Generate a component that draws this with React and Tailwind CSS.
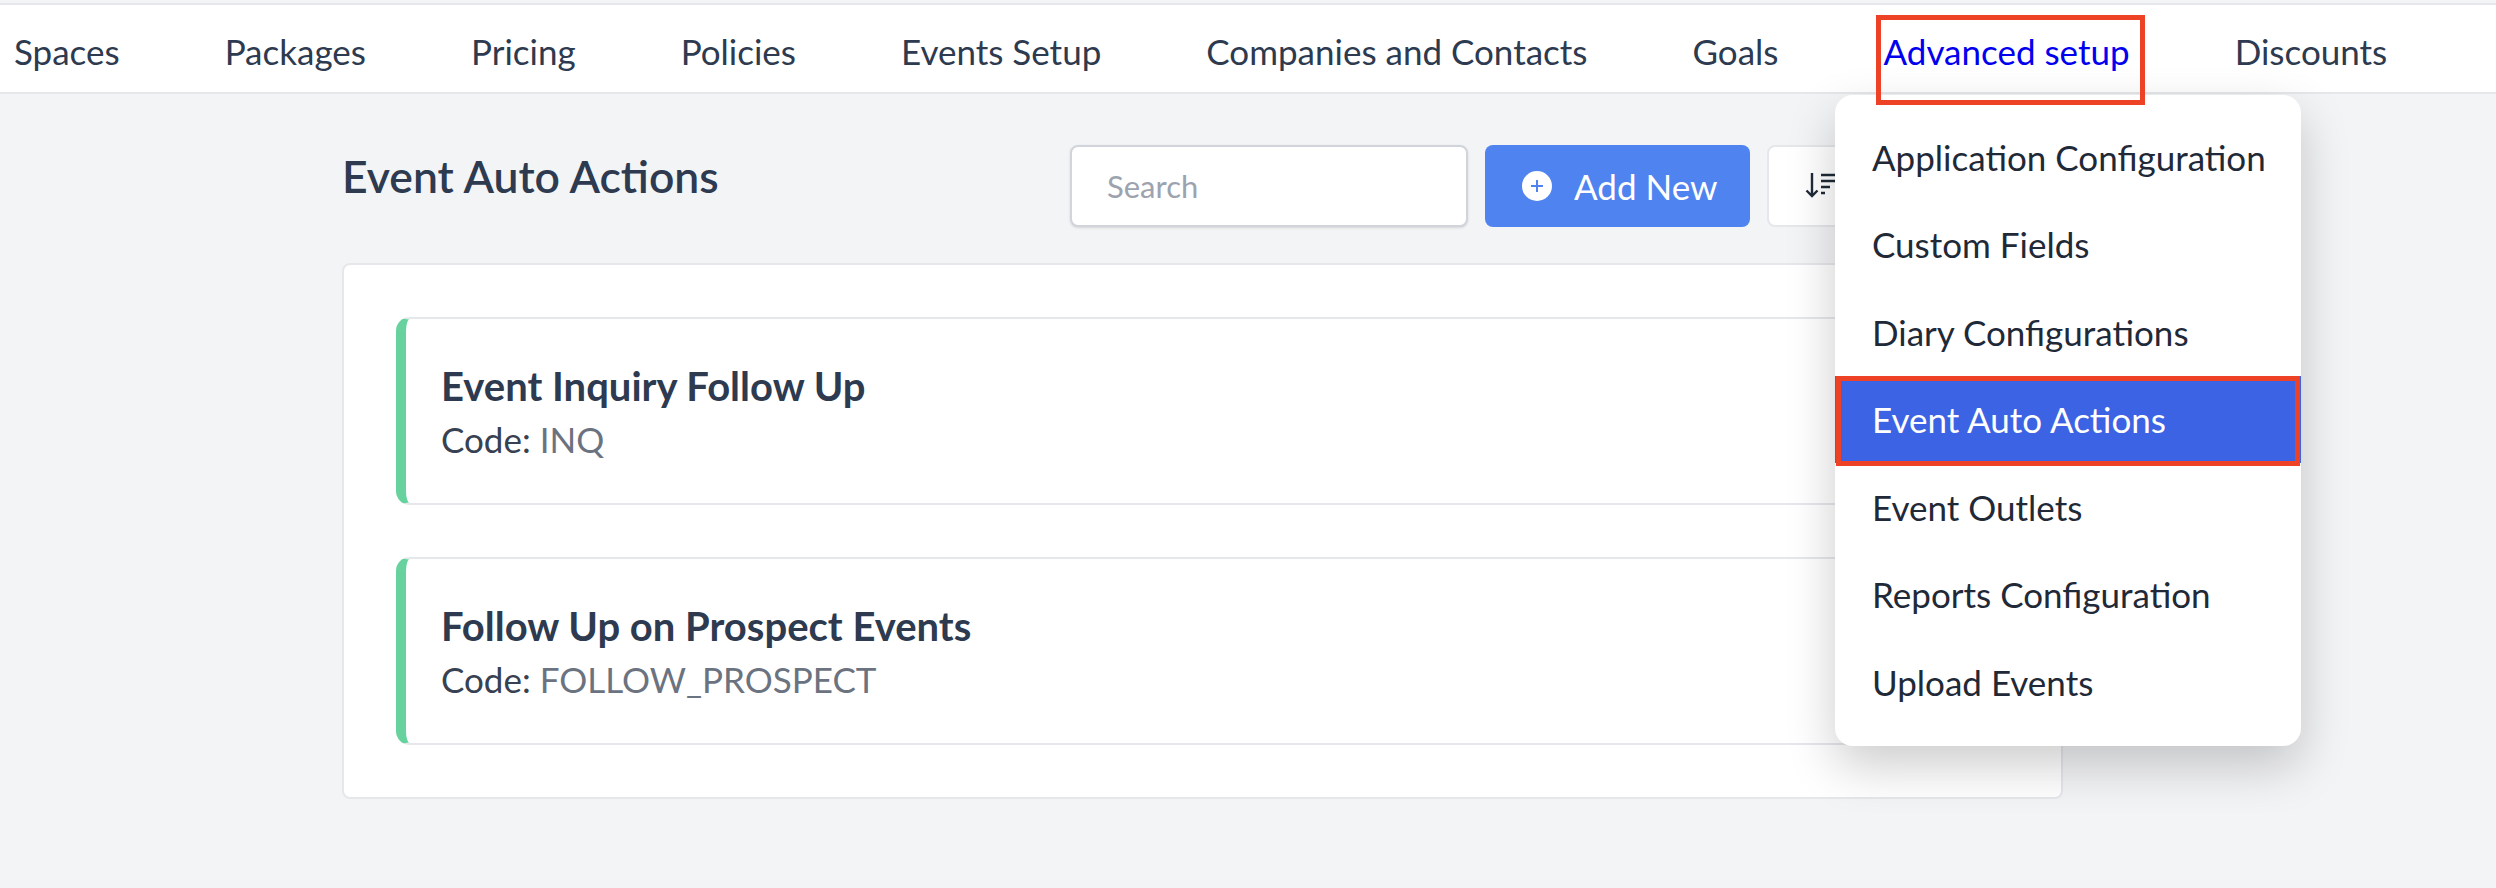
import React from "react";

const NAV_ITEMS = [
  "Spaces",
  "Packages",
  "Pricing",
  "Policies",
  "Events Setup",
  "Companies and Contacts",
  "Goals",
  "Advanced setup",
  "Discounts",
];

const MENU_ITEMS = [
  "Application Configuration",
  "Custom Fields",
  "Diary Configurations",
  "Event Auto Actions",
  "Event Outlets",
  "Reports Configuration",
  "Upload Events",
];

const ACTIONS = [
  { name: "Event Inquiry Follow Up", code: "INQ" },
  { name: "Follow Up on Prospect Events", code: "FOLLOW_PROSPECT" },
];

function SortIcon() {
  return (
    <svg width="40" height="32" viewBox="0 0 40 32" fill="none" stroke="#1f2937" strokeWidth="2.4">
      <path d="M8 3v23M2.5 20.5 8 26l5.500-5.500" />
      <path d="M17 5h20M17 11h15M17 17h9M17 23h4" />
    </svg>
  );
}

function ActionCard({ name, code }) {
  return (
    <div className="flex h-[188px] flex-col justify-center rounded-[14px] border-2 border-l-[10px] border-[#e5e7eb] border-l-[#68d29f] bg-white pl-[35px]">
      <div className="text-[40px] leading-[50px] font-bold text-[#2d3a4f]">{name}</div>
      <div className="mt-[6px] text-[35px] leading-[44px] text-[#374151]">
        Code: <span className="text-[#6b7280]">{code}</span>
      </div>
    </div>
  );
}

export default function App() {
  return (
    <div className="relative h-[888px] overflow-hidden bg-[#f3f4f6] font-['Lato',sans-serif]">
      {/* top nav */}
      <nav className="mt-[3px] flex h-[91px] items-start gap-[105px] border-t-[2px] border-b-[2px] border-[#e5e7eb] bg-white pt-[22px] pl-[14px] text-[35px] leading-[48px] text-[#2d3a4f]">
        {NAV_ITEMS.map((item) => (
          <a key={item} className={item === "Advanced setup" ? "text-[#0000ee]" : ""}>
            {item}
          </a>
        ))}
      </nav>

      <main className="ml-[342px] w-[1721px]">
        <div className="flex items-start justify-between pt-[51px]">
          <h1 className="mt-[6px] text-[44.500px] leading-[50px] font-semibold text-[#2d3a4f]">
            Event Auto Actions
          </h1>
          <div className="flex gap-[17px]">
            <div className="flex h-[82px] w-[398px] items-center rounded-[8px] border-2 border-[#d1d5db] bg-white pl-[35px] text-[31px] text-[#9ca3af] shadow-sm">
              Search
            </div>
            <button className="flex h-[82px] w-[265px] items-center rounded-[8px] bg-[#4f83ef] pl-[37px] text-[35px] text-white">
              <span className="mr-[22px] flex h-[30px] w-[30px] items-center justify-center rounded-full bg-white">
                <svg width="14" height="14" viewBox="0 0 14 14" stroke="#4f83ef" strokeWidth="2">
                  <path d="M7 1v12M1 7h12" />
                </svg>
              </span>
              Add New
            </button>
            <button className="flex h-[82px] w-[296px] items-center rounded-[8px] border-2 border-[#e5e7eb] bg-white pl-[35px]">
              <SortIcon />
            </button>
          </div>
        </div>

        <div className="mt-[36px] flex h-[536px] flex-col gap-[52px] rounded-[8px] border-2 border-[#e5e7eb] bg-white px-[52px] pt-[52px]">
          {ACTIONS.map((action) => (
            <ActionCard key={action.code} {...action} />
          ))}
        </div>
      </main>

      {/* dropdown under Advanced setup */}
      <div className="absolute top-[95px] left-[1835px] w-[466px] rounded-[18px] bg-white pt-[18px] pb-[20px] text-[35px] text-[#1f2937] shadow-[0_20px_50px_rgba(0,0,0,0.2)]">
        {MENU_ITEMS.map((item) => (
          <div
            key={item}
            className={
              item === "Event Auto Actions"
                ? "flex h-[87.500px] items-center bg-[#3b63e4] pl-[37px] text-white"
                : "flex h-[87.500px] items-center pl-[37px]"
            }
          >
            {item}
          </div>
        ))}
      </div>

      {/* red annotations */}
      <div className="absolute top-[15px] left-[1876px] h-[90px] w-[269px] border-[5px] border-[#ee4226]" />
      <div className="absolute top-[376px] left-[1836px] h-[90px] w-[464px] border-[5px] border-[#ee4226]" />
    </div>
  );
}
